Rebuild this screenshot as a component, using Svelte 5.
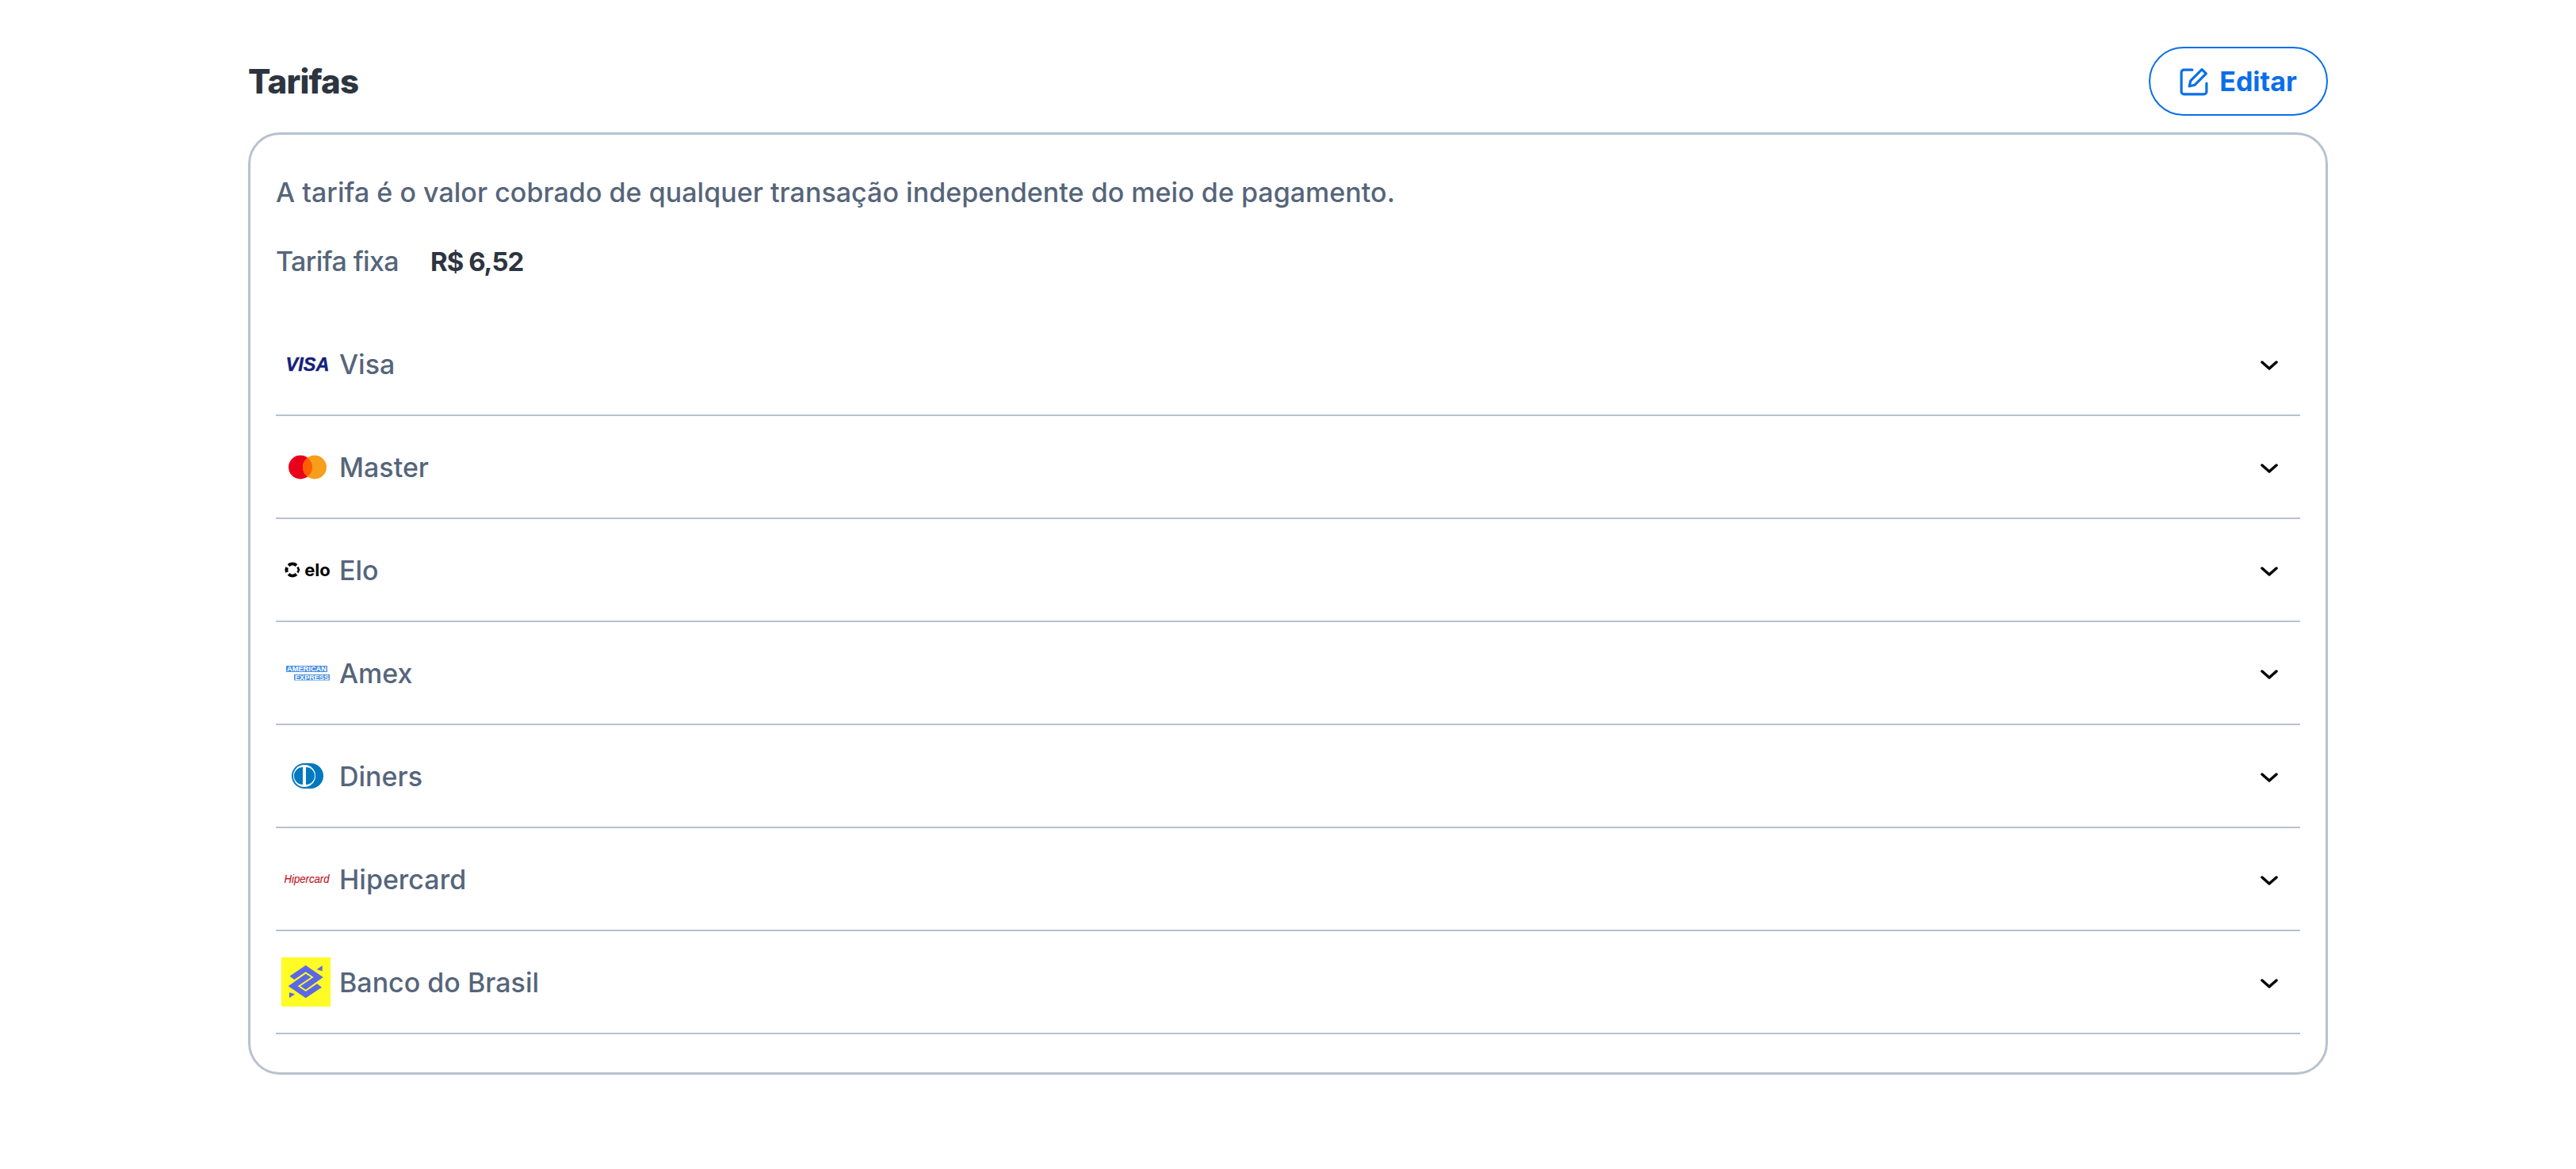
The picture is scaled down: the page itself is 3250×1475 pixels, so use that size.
<script>
  const brands = ['Visa','Master','Elo','Amex','Diners','Hipercard','Banco do Brasil'];
</script>

<main class="page">
  <header class="head">
    <h1>Tarifas</h1>
    <button class="edit">
      <svg class="edit-icon" viewBox="0 0 34 34" fill="none" stroke="currentColor" stroke-width="3" stroke-linecap="round" stroke-linejoin="round">
        <path d="M15 3H5a3 3 0 0 0-3 3v23a3 3 0 0 0 3 3h24a3 3 0 0 0 3-3V19"/>
        <path d="M26.500 2.500l5 5L18 21l-6.500 1.500L13 16z"/>
      </svg>
      <span>Editar</span>
    </button>
  </header>
  <section class="card">
    <p class="desc">A tarifa é o valor cobrado de qualquer transação independente do meio de pagamento.</p>
    <div class="fixed"><span class="fixed-label">Tarifa fixa</span><strong>R$ 6,52</strong></div>
    <ul class="list">
      {#each brands as b}
        <li class="row">
          <span class="logo">
            {#if b==='Visa'}
              <svg viewBox="0 0 62 62"><text x="33" y="39.500" text-anchor="middle" class="t-visa">VISA</text></svg>
            {:else if b==='Master'}
              <svg viewBox="0 0 62 62"><circle cx="24" cy="31.500" r="15" fill="#eb001b"/><circle cx="42" cy="31.500" r="15" fill="#f79e1b"/><path d="M33 19.500a15 15 0 0 1 0 24a15 15 0 0 1 0-24z" fill="#ff5f00"/></svg>
            {:else if b==='Elo'}
              <svg viewBox="0 0 62 62">
                <path d="M19 25.500A7.500 7.500 0 0 0 9 25.500M7 28A7.500 7.500 0 0 0 7 34M9 36.500A7.500 7.500 0 0 0 19 36.500" fill="none" stroke="#000" stroke-width="4"/>
                <path d="M20.500 27.500l1.500 3.500-1.500 3.500" fill="none" stroke="#000" stroke-width="2.500"/>
                <text x="45.500" y="38.500" text-anchor="middle" class="t-elo">elo</text>
              </svg>
            {:else if b==='Amex'}
              <svg viewBox="0 0 62 62">
                <rect x="6" y="22" width="52" height="8" fill="#4a90e2"/><rect x="16" y="33" width="45" height="7.500" fill="#4a90e2"/>
                <text x="7" y="29.200" textLength="50" lengthAdjust="spacingAndGlyphs" class="t-amex">AMERICAN</text>
                <text x="17" y="39.700" textLength="43" lengthAdjust="spacingAndGlyphs" class="t-amex">EXPRESS</text>
              </svg>
            {:else if b==='Diners'}
              <svg viewBox="0 0 62 62">
                <path d="M29 15H37a16 16 0 0 1 0 32H29a16 16 0 0 1 0-32z" fill="#0079be"/>
                <circle cx="29" cy="31" r="14" fill="#fff"/>
                <path d="M27 20a11 11 0 0 0 0 22zM31 20a11 11 0 0 1 0 22z" fill="#0079be"/>
              </svg>
            {:else if b==='Hipercard'}
              <svg viewBox="0 0 62 62"><text x="3.500" y="36" textLength="57" lengthAdjust="spacingAndGlyphs" class="t-hiper">Hipercard</text></svg>
            {:else}
              <svg viewBox="48 36 186 186">
                <rect x="48" y="36" width="186" height="186" fill="#fffb24"/>
                <path d="M140 66L206 111L140 158L120 145L170 111L140 91L97 120L79 107Z" fill="#5b67e6"/>
                <path d="M140 190L74 145L140 98L160 111L110 145L140 165L183 136L201 149Z" fill="#5b67e6"/>
                <path d="M203 67V88L182 82ZM78 190V169L99 175Z" fill="#5b67e6"/>
              </svg>
            {/if}
          </span>
          <span class="name">{b}</span>
          <svg class="chev" viewBox="0 0 22 12" fill="none" stroke="#000" stroke-width="3.500" stroke-linecap="round" stroke-linejoin="round"><path d="M2 2l9 8 9-8"/></svg>
        </li>
      {/each}
    </ul>
  </section>
</main>

<style>
  :global(body) { margin: 0; background: #fff; }
  .page { width: 2624px; margin: 0 auto; padding-top: 59px; font-family: Inter, "Open Sans", sans-serif; font-weight: 500; color: #56657a; }
  .head { display: flex; justify-content: space-between; align-items: center; height: 87px; margin-bottom: 21px; }
  h1 { margin: 0; font-size: 42px; font-weight: 800; letter-spacing: -0.8px; color: #2d3540; }
  .edit { display: flex; align-items: center; justify-content: center; gap: 14px; width: 226px; height: 87px; padding: 0; border: 2.500px solid #0a6fe8; border-radius: 44px; background: #fff; color: #0a6fe8; font: 700 34px Inter, sans-serif; }
  .edit-icon { width: 36px; height: 36px; }
  .card { box-sizing: border-box; border: 3px solid #b8c2cf; border-radius: 40px; padding: 34px 32px 48px; }
  .desc { margin: 14px 0 0; font-size: 34px; line-height: 50px; letter-spacing: 0.03px; }
  .fixed { display: flex; gap: 40px; margin-top: 37px; font-size: 34px; line-height: 50px; }
  .fixed-label { letter-spacing: -0.6px; }
  .fixed strong { color: #2d3540; font-weight: 700; font-size: 33px; letter-spacing: -1px; }
  .list { list-style: none; margin: 40px 0 0; padding: 0; }
  .row { box-sizing: border-box; height: 130px; display: flex; align-items: center; border-bottom: 2px solid #b8c2cf; padding-left: 7px; font-size: 34px; }
  .logo { width: 62px; height: 62px; flex: none; }
  .logo svg { display: block; width: 62px; height: 62px; overflow: visible; }
  .name { margin-left: 11px; }
  .chev { width: 22px; height: 12px; margin: 3px 28px 0 auto; }
  .t-visa { font: italic 700 23.500px "Liberation Sans", sans-serif; fill: #14207a; stroke: #14207a; stroke-width: 0.4px; }
  .t-elo { font: 700 22px Inter, sans-serif; fill: #000; }
  .t-amex { font: 700 9.500px "Liberation Sans", sans-serif; fill: #fff; }
  .t-hiper { font: italic 400 14px "Liberation Sans", sans-serif; fill: #c0141e; stroke: #c0141e; stroke-width: 0.15px; }
</style>
